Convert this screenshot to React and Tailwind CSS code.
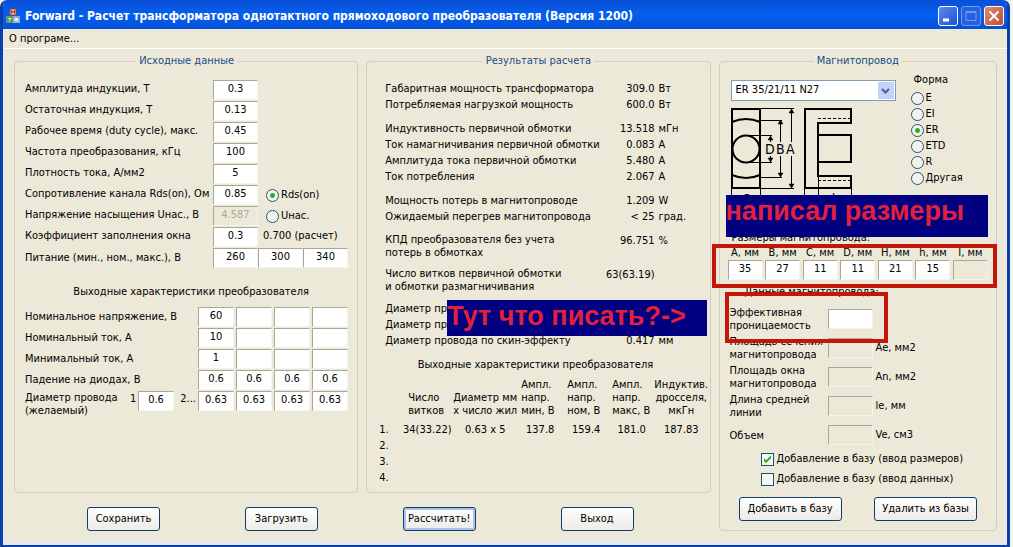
import clsx from 'clsx';

const inputRows = [
  { id: 'bmax', label: 'Амплитуда индукции, Т', value: '0.3' },
  { id: 'brem', label: 'Остаточная индукция, Т', value: '0.13' },
  { id: 'duty', label: 'Рабочее время (duty cycle), макс.', value: '0.45' },
  { id: 'freq', label: 'Частота преобразования, кГц', value: '100' },
  { id: 'dens', label: 'Плотность тока, А/мм2', value: '5' },
  { id: 'rds', label: 'Сопротивление канала Rds(on), Ом', value: '0.85', radio: 'Rds(on)' },
  { id: 'usat', label: 'Напряжение насыщения Uнас., В', value: '4.587', radio: 'Uнас.', disabled: true },
  { id: 'fill', label: 'Коэффициент заполнения окна', value: '0.3', note: '0.700 (расчет)' },
];

const outputRows = [
  { label: 'Номинальное напряжение, В', values: ['60', '', '', ''] },
  { label: 'Номинальный ток, А', values: ['10', '', '', ''] },
  { label: 'Минимальный ток, А', values: ['1', '', '', ''] },
  { label: 'Падение на диодах, В', values: ['0.6', '0.6', '0.6', '0.6'] },
];

const resultGroups = [
  [['Габаритная мощность трансформатора', '309.0', 'Вт'], ['Потребляемая нагрузкой мощность', '600.0', 'Вт']],
  [
    ['Индуктивность первичной обмотки', '13.518', 'мГн'],
    ['Ток намагничивания первичной обмотки', '0.083', 'А'],
    ['Амплитуда тока первичной обмотки', '5.480', 'А'],
    ['Ток потребления', '2.067', 'А'],
  ],
  [['Мощность потерь в магнитопроводе', '1.209', 'W'], ['Ожидаемый перегрев магнитопровода', '< 25', 'град.']],
  [['КПД преобразователя без учета\nпотерь в обмотках', '96.751', '%']],
  [['Число витков первичной обмотки\nи обмотки размагничивания', '63(63.19)', '']],
  [['Диаметр про', '', ''], ['Диаметр про', '', ''], ['Диаметр провода по скин-эффекту', '0.417', 'мм']],
];

const sizes = [['A', '35'], ['B', '27'], ['C', '11'], ['D', '11'], ['H', '21'], ['h', '15'], ['I', null]];

const coreData = [
  { id: 'mu', label: 'Эффективная\nпроницаемость', unit: '' },
  { id: 'ae', label: 'Площадь сечения\nмагнитопровода', unit: 'Ae, мм2', disabled: true },
  { id: 'an', label: 'Площадь окна\nмагнитопровода', unit: 'An, мм2', disabled: true },
  { id: 'le', label: 'Длина средней\nлинии', unit: 'le, мм', disabled: true },
  { id: 've', label: 'Объем', unit: 'Ve, см3', disabled: true },
];

const Field = ({ className, ...props }) => (
  <input
    type="text"
    className={clsx(
      'h-5 shrink-0 border border-t-[#a9a799] border-l-[#a9a799] border-r-[#f6f4ea] border-b-[#f6f4ea] bg-white pb-1 text-center text-black outline-none disabled:bg-[#ece9d8] disabled:text-[#aca899]',
      className
    )}
    {...props}
  />
);

const Group = ({ title, className, children }) => (
  <fieldset className={clsx('relative min-w-0 rounded-[4px] border border-[#d0d0bf]', className)}>
    <legend className="mx-auto px-[3px] text-[#1c4a8c]">{title}</legend>
    {children}
  </fieldset>
);

const Radio = ({ label, className, ...props }) => (
  <label className={clsx('flex items-center gap-[2px] whitespace-nowrap', className)}>
    <input
      type="radio"
      className="size-[13px] shrink-0 appearance-none rounded-full border border-[#2b5274] bg-[#f4f4ef] checked:bg-[radial-gradient(circle,#2fae32_0_2px,#f4f4ef_3px)]"
      {...props}
    />
    {label}
  </label>
);

const Check = ({ label, ...props }) => (
  <label className="flex items-center gap-[3px] whitespace-nowrap">
    <span className="relative size-[13px]">
      <input type="checkbox" className="peer block size-[13px] appearance-none border border-[#1c5180] bg-[#f6f6f2]" {...props} />
      <svg viewBox="0 0 13 13" className="pointer-events-none absolute inset-0 hidden size-[13px] peer-checked:block">
        <path d="M3 5v3l2 2 5-5V2.500L5 7.500z" fill="#21a121" />
      </svg>
    </span>
    {label}
  </label>
);

const Button = ({ focused, className, children }) => (
  <button
    type="button"
    className={clsx(
      'h-6 rounded-[3px] border border-[#123c6b] bg-linear-to-b from-white to-[#ecebe6] whitespace-nowrap',
      focused && 'shadow-[inset_0_0_0_2px_#a9c3ee]',
      className
    )}
  >
    {children}
  </button>
);

function TitleBar() {
  return (
    <header className="flex h-[29px] items-center gap-[5px] bg-linear-to-b from-[#0a4fd6] via-[#0560f0] to-[#0350d8] pt-[3px] pr-[3px] pl-[3px]">
      <svg viewBox="0 0 14 16" className="h-4 w-[14px]">
        <rect x="4" y="1" width="6" height="6" fill="#e8c8c4" stroke="#a33b34" />
        <path d="M5.500 5.500v-3l1.500 2 1.500-2v3" fill="none" stroke="#b02a22" />
        <rect x="0.500" y="8.500" width="6" height="6" fill="#4d9a5a" stroke="#5f9a78" />
        <path d="M2 10.500h3l-2 3" fill="none" stroke="#e4f2e4" />
        <rect x="7.500" y="8.500" width="6" height="6" fill="#7fa6cf" stroke="#8fa9cc" />
        <path d="M12 10.500H9v2.500h3v-1.500H9" fill="none" stroke="#f0f5ff" />
      </svg>
      <h1 className="flex-1 font-['DejaVu_Sans_Condensed','DejaVu_Sans',sans-serif] text-[12px] font-bold whitespace-nowrap text-white">
        Forward - Расчет трансформатора однотактного прямоходового преобразователя (Версия 1200)
      </h1>
      <div className="flex gap-[3px]">
        <button type="button" aria-label="Свернуть" className="size-5 rounded-[3px] border border-white bg-linear-to-br from-[#5b8cf0] to-[#1a4fd0]">
          <svg viewBox="0 0 18 18"><path d="M4 13h6" stroke="#fff" strokeWidth="3" /></svg>
        </button>
        <button type="button" aria-label="Развернуть" disabled className="size-5 rounded-[3px] border border-[#6f9cf2] bg-[#2460e0]">
          <svg viewBox="0 0 18 18"><path d="M4 4.500h10v9H4zM4 5.500h10" fill="none" stroke="#6f9cf2" /></svg>
        </button>
        <button type="button" aria-label="Закрыть" className="size-5 rounded-[3px] border border-white bg-linear-to-br from-[#e08a74] to-[#c04a2c]">
          <svg viewBox="0 0 18 18"><path d="M4.500 4.500l9 9M13.500 4.500l-9 9" stroke="#fff" strokeWidth="2" /></svg>
        </button>
      </div>
    </header>
  );
}

function SourceData() {
  return (
    <Group title="Исходные данные" className="pr-[9px] pb-3 pl-[10px]">
      <div className="mt-[11px] flex flex-col gap-px">
        {inputRows.map((r) => (
          <div key={r.id} className="flex h-5 items-center">
            <label htmlFor={r.id} className="w-[188px] shrink-0 pb-[2px] whitespace-nowrap">{r.label}</label>
            <Field id={r.id} defaultValue={r.value} disabled={r.disabled} className="w-[45px]" />
            {r.radio && <Radio label={r.radio} name="loss" defaultChecked={!r.disabled} className="ml-2" />}
            {r.note && <span className="ml-[5px] pb-[2px] whitespace-nowrap">{r.note}</span>}
          </div>
        ))}
        <div className="flex h-5 items-center">
          <label htmlFor="umin" className="w-[188px] shrink-0">Питание (мин., ном., макс.), В</label>
          <Field id="umin" defaultValue="260" className="w-[45px]" />
          <Field aria-label="Питание ном., В" defaultValue="300" className="w-[45px]" />
          <Field aria-label="Питание макс., В" defaultValue="340" className="w-[45px]" />
        </div>
      </div>

      <h2 className="mt-4 mb-[7px] ml-1 text-center">
        <span className="pl-[5px]">Выходные характеристики преобразователя</span>
      </h2>

      <div className="flex flex-col gap-px">
        {outputRows.map((r) => (
          <div key={r.label} className="flex h-5 items-center gap-[2px]">
            <span className="w-[171px] shrink-0">{r.label}</span>
            {r.values.map((v, i) => (
              <Field key={i} aria-label={`${r.label} ${i + 1}`} defaultValue={v} className="w-9" />
            ))}
          </div>
        ))}
        <div className="flex h-5 items-start gap-[2px]">
          <span className="w-[103px] shrink-0 leading-[13px]">Диаметр провода (желаемый)</span>
          <label htmlFor="wire1" className="w-[6px]">1</label>
          <Field id="wire1" defaultValue="0.6" className="w-9" />
          <span className="w-5 text-right">2...</span>
          {[1, 2, 3, 4].map((i) => (
            <Field key={i} aria-label={`Диаметр провода ${i + 1}`} defaultValue="0.63" className="w-9" />
          ))}
        </div>
      </div>
    </Group>
  );
}

function Results() {
  return (
    <Group title="Результаты расчета" className="pb-1">
      <div className="mt-3 ml-[18px] flex flex-col gap-2">
        {resultGroups.map((group, g) => (
          <dl key={g} className="flex flex-col">
            {group.map(([label, value, unit], i) => (
              <div key={i} className="flex leading-4">
                <dt className={clsx('flex-1 whitespace-pre', label.includes('\n') && 'leading-[13px]')}>{label}</dt>
                <dd className="shrink-0 whitespace-nowrap">{value}</dd>
                <dd className="w-[55px] shrink-0 pl-1">{unit}</dd>
              </div>
            ))}
          </dl>
        ))}
      </div>

      <h2 className="mt-2 mr-[6px] mb-[5px] text-center">Выходные характеристики преобразователя</h2>

      <table className="ml-2 table-fixed">
        <thead>
          <tr className="text-left align-bottom leading-[13px] whitespace-pre">
            <th className="w-[26px]" />
            <th className="w-[52px] pl-[7px] font-normal">{'Число\nвитков'}</th>
            <th className="w-[60px] font-normal">{'Диаметр мм\nх число жил'}</th>
            <th className="w-[46px] pl-1 font-normal">{'Ампл.\nнапр.\nмин, В'}</th>
            <th className="w-[46px] pl-1 font-normal">{'Ампл.\nнапр.\nном, В'}</th>
            <th className="w-[45px] pl-[3px] font-normal">{'Ампл.\nнапр.\nмакс, В'}</th>
            <th className="w-[54px] text-center font-normal">{'Индуктив.\nдросселя,\nмкГн'}</th>
          </tr>
        </thead>
        <tbody className="before:block before:h-[5px]">
          <tr className="text-center leading-4 whitespace-nowrap">
            <td className="pl-1 text-left">1.</td>
            <td>34(33.22)</td>
            <td>0.63 x 5</td>
            <td>137.8</td>
            <td>159.4</td>
            <td>181.0</td>
            <td>187.83</td>
          </tr>
          {[2, 3, 4].map((n) => (
            <tr key={n} className="leading-4">
              <td className="pl-1">{n}.</td>
              <td colSpan={6} />
            </tr>
          ))}
        </tbody>
      </table>

      <p className="absolute top-[231px] left-20 h-9 w-[260px] bg-[#000080] font-['Liberation_Sans',Arial,sans-serif] text-[27px] leading-8 font-bold whitespace-nowrap text-[#e0203c]">
        Тут что писать?-&gt;
      </p>
    </Group>
  );
}

// ER core, front and side view with the dimension lines
function CoreDrawing() {
  return (
    <svg viewBox="0 0 124 92" className="h-[92px] w-[124px] overflow-visible" fill="none" stroke="#000">
      <g strokeWidth="2">
        <path d="M1 1h28v79H1zM74 1h46v14H87v53h33v12H74z" />
        <circle cx="15" cy="41" r="13.500" />
        <path d="M1 14q14-6 28 0M1 67q14 6 28 0M87 27h33v27H87" />
      </g>
      <path d="M29 .5h34M29 12.500h22M15 27.500h26M15 54.500h26M29 69.500h22M29 80.500h34" />
      <path d="M60.500 1v33M60.500 48v32M49.500 12v22M49.500 48v21M39.500 28v6M39.500 48v6" />
      <path d="M58 5l2.500-4L63 5zM58 76l2.500 4 2.500-4zM47 16l2.500-4 2.500 4zM47 65l2.500 4 2.500-4zM37 32l2.500-4 2.500 4zM37 50l2.500 4 2.500-4z" fill="#000" strokeWidth=".5" />
      <path d="M87 10.500h32M87 72.500h32" strokeDasharray="3 2" />
      <path d="M.5 80v8M29.500 80v8M73.500 80v8M87.500 68v20M120.500 80v8" />
      <g fill="#000" stroke="none" fontSize="14">
        <text x="34" y="46">D</text>
        <text x="45" y="46">B</text>
        <text x="55" y="46">A</text>
      </g>
      <g fill="#000" stroke="none" fontSize="13">
        <text x="11" y="95">C</text>
        <text x="101" y="95">h</text>
      </g>
    </svg>
  );
}

function Core() {
  return (
    <Group title="Магнитопровод" className="pb-[9px]">
      <div className="mt-[11px] ml-[11px] flex">
        <div className="w-[165px] shrink-0">
          <div className="relative">
            <select aria-label="Магнитопровод" className="block h-[21px] w-full appearance-none border border-[#7f9db9] bg-white pb-px pl-1 outline-none">
              <option>ER 35/21/11 N27</option>
            </select>
            <span className="pointer-events-none absolute top-[2px] right-[2px] flex h-[17px] w-4 items-center justify-center bg-[#c3d3fb]">
              <svg viewBox="0 0 9 6" className="h-[6px] w-[9px]"><path d="M1 1l3.500 3.500L8 1" fill="none" stroke="#4d6185" strokeWidth="2" /></svg>
            </span>
          </div>
          <div className="mt-[7px]"><CoreDrawing /></div>
        </div>
        <div role="radiogroup" aria-label="Форма" className="ml-[15px] leading-4">
          <p className="mt-[-8px] ml-[3px] pb-[2px]">Форма</p>
          {['E', 'EI', 'ER', 'ETD', 'R', 'Другая'].map((s) => (
            <Radio key={s} label={s} name="shape" defaultChecked={s === 'ER'} />
          ))}
        </div>
      </div>

      <h2 className="mt-[30px] ml-3">Размеры магнитопровода:</h2>
      <div className="mr-2 ml-2 flex justify-between">
        {sizes.map(([name, value]) => (
          <label key={name} className="flex w-[35px] flex-col text-center leading-[14px] whitespace-nowrap">
            {name}, мм
            <Field defaultValue={value ?? ''} disabled={value === null} className="w-[35px]" />
          </label>
        ))}
      </div>

      <h2 className="mt-1 ml-[25px]">Данные магнитопровода:</h2>
      <div className="mt-[6px] ml-[10px] flex flex-col gap-[3px]">
        {coreData.map((r) => (
          <div key={r.id} className="flex h-[26px] items-center">
            <label htmlFor={r.id} className="w-[98px] shrink-0 leading-[13px] whitespace-pre">{r.label}</label>
            <Field id={r.id} disabled={r.disabled} className="w-[45px]" />
            <span className="ml-[3px]">{r.unit}</span>
          </div>
        ))}
      </div>

      <div className="mt-[3px] ml-[41px] flex flex-col gap-1">
        <Check label="Добавление в базу (ввод размеров)" defaultChecked />
        <Check label="Добавление в базу (ввод данных)" />
      </div>
      <div className="mt-[10px] mr-[19px] ml-[19px] flex justify-between">
        <Button className="w-[103px]">Добавить в базу</Button>
        <Button className="w-[103px]">Удалить из базы</Button>
      </div>

      <p className="absolute top-[126px] left-[6px] h-[42px] w-[262px] bg-[#000080] font-['Liberation_Sans',Arial,sans-serif] text-[27px] leading-8 font-bold whitespace-nowrap text-[#e0203c]">
        написал размеры
      </p>
      <div className="pointer-events-none absolute top-[175px] -left-2 h-11 w-[285px] border-4 border-[#c4170c]" />
      <div className="pointer-events-none absolute top-[223px] left-[5px] h-[51px] w-[163px] border-4 border-[#c4170c]" />
    </Group>
  );
}

export default function App() {
  return (
    <div className="bg-[#f3f4ee] pr-[3px] font-['DejaVu_Sans_Condensed','DejaVu_Sans',sans-serif] text-[11px] leading-4 text-black">
      <div className="overflow-hidden rounded-t-[7px] border-x-3 border-b-2 border-[#0b3fae] bg-[#ece9d8]">
        <TitleBar />
        <nav className="h-5 border-b border-white pl-[6px]">
          <button type="button" className="leading-[19px]">О програме...</button>
        </nav>
        <main className="grid grid-cols-[698fr_279fr] gap-2 pt-1 pr-[10px] pb-[14px] pl-[11px] shadow-[inset_0_-3px_4px_1px_#e6e8f2]">
          <div className="flex flex-col">
            <div className="grid flex-1 grid-cols-2 gap-2">
              <SourceData />
              <Results />
            </div>
            <div className="mt-[14px] ml-[73px] mr-[77px] flex justify-between">
              <Button className="w-[73px]">Сохранить</Button>
              <Button className="w-[73px]">Загрузить</Button>
              <Button className="w-[73px]" focused>Рассчитать!</Button>
              <Button className="w-[73px]">Выход</Button>
            </div>
          </div>
          <Core />
        </main>
      </div>
    </div>
  );
}
